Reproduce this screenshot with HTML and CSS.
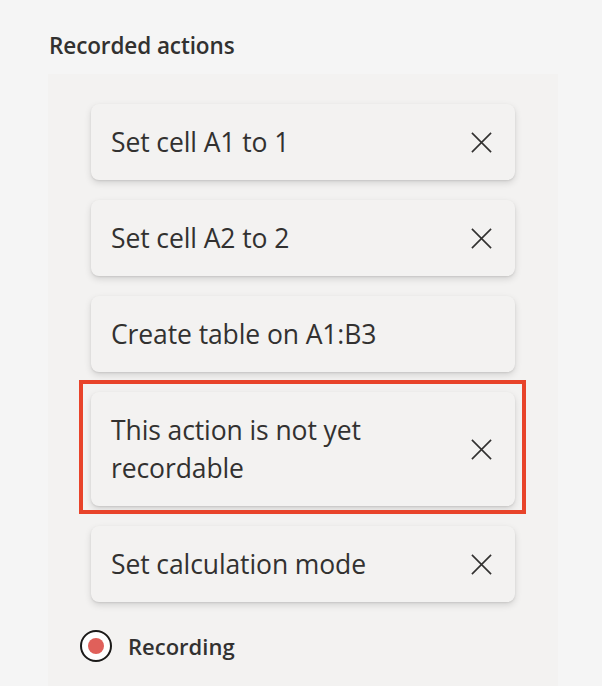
FILE: index.html
```html
<!DOCTYPE html>
<html>
<head>
<meta charset="utf-8">
<link rel="stylesheet" href="styles.css">
</head>
<body>
<h2 class="title">Recorded actions</h2>
<div class="panel">
  <div class="card"><span class="label">Set cell A1 to 1</span><svg class="x" viewBox="0 0 24 24"><path d="M2 2L22 22M22 2L2 22"/></svg></div>
  <div class="card"><span class="label">Set cell A2 to 2</span><svg class="x" viewBox="0 0 24 24"><path d="M2 2L22 22M22 2L2 22"/></svg></div>
  <div class="card"><span class="label">Create table on A1:B3</span></div>
  <div class="card highlighted"><span class="label">This action is not yet<br>recordable</span><svg class="x" viewBox="0 0 24 24"><path d="M2 2L22 22M22 2L2 22"/></svg><div class="outline"></div></div>
  <div class="card"><span class="label">Set calculation mode</span><svg class="x" viewBox="0 0 24 24"><path d="M2 2L22 22M22 2L2 22"/></svg></div>
  <div class="recording"><span class="rec-icon"><span class="rec-dot"></span></span><span class="rec-label">Recording</span></div>
</div>
</body>
</html>
```
FILE: styles.css
```css
html, body {
  margin: 0;
  padding: 0;
  background: #f5f5f5;
  font-family: "Open Sans", "Noto Sans", sans-serif;
  color: #323130;
  overflow: hidden;
}
.title {
  margin: 0 0 15px 0;
  padding: 32px 0 0 49px;
  font-size: 22.5px;
  line-height: 27px;
  font-weight: 600;
  letter-spacing: -0.1px;
}
.panel {
  margin-left: 48px;
  width: 510px;
  height: 640px;
  background: #f3f2f1;
  padding: 30px 43px 0 43px;
  box-sizing: border-box;
  display: flex;
  flex-direction: column;
  gap: 20px;
}
.card {
  position: relative;
  background: #f3f2f1;
  border-radius: 8px;
  box-shadow: 0 3px 7px rgba(0,0,0,0.13), 0 1px 2px rgba(0,0,0,0.09);
  padding: 19px 22px 19px 20px;
  display: flex;
  align-items: center;
  justify-content: space-between;
}
.label {
  font-size: 26.5px;
  line-height: 38px;
  letter-spacing: -0.1px;
}
.x {
  width: 23px;
  height: 23px;
  flex: none;
}
.x path {
  stroke: #323130;
  stroke-width: 1.7;
  fill: none;
}
.outline {
  position: absolute;
  top: -12px;
  left: -12px;
  right: -11px;
  bottom: -8px;
  border: 4px solid #e8432a;
  pointer-events: none;
}
.recording {
  display: flex;
  align-items: center;
  margin-left: -11px;
  margin-top: 8px;
  gap: 16px;
}
.rec-icon {
  width: 32px;
  height: 32px;
  box-sizing: border-box;
  border: 2.5px solid #1b1a19;
  border-radius: 50%;
  display: flex;
  align-items: center;
  justify-content: center;
  background: #fff;
}
.rec-dot {
  width: 16px;
  height: 16px;
  border-radius: 50%;
  background: #e0605a;
}
.rec-label {
  font-size: 22px;
  font-weight: 600;
  line-height: 28px;
}
```
